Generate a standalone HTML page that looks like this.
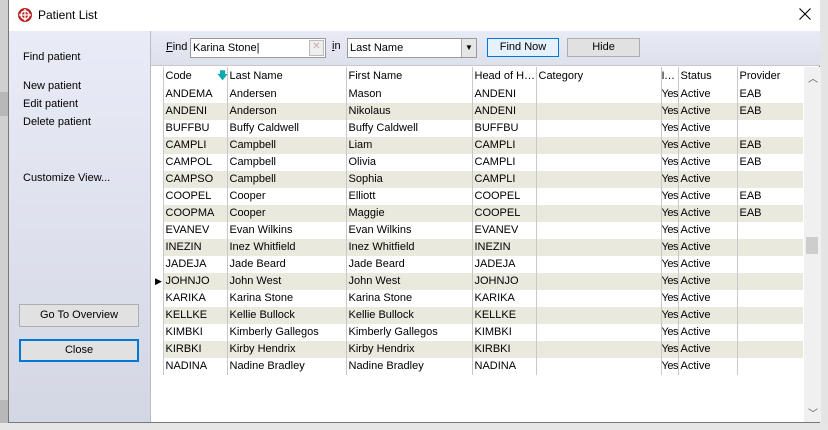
<!DOCTYPE html>
<html><head><meta charset="utf-8">
<style>
*{margin:0;padding:0;box-sizing:border-box}
body{width:828px;height:430px;overflow:hidden;background:#d0d0d0;font-family:"Liberation Sans",sans-serif;font-size:11px;color:#000;position:relative}
.abs{position:absolute}
.win{left:8px;top:0;width:812px;height:423px;background:#fff;border:1px solid #777;border-top:none}
.title{left:0;top:0;width:811px;height:31px;background:#fff}
.left{left:0;top:31px;width:142px;height:391px;background:linear-gradient(#e9ecf7,#d3d7e3);border-right:1px solid #b8bcc8}
.left .lnk{position:absolute;left:14px;font-size:11px}
.btn{position:absolute;border:1px solid #adadad;background:#e1e1e1;text-align:center;font-size:11px}
.tool{left:142px;top:31px;width:669px;height:35px;background:linear-gradient(#e8ebf5,#dde1ec);border-bottom:1px solid #c8c8c8}
table{border-collapse:collapse;position:absolute;left:155px;top:67px;table-layout:fixed;width:648px}
td{height:17px;padding:0 0 0 2px;white-space:nowrap;overflow:hidden;border-left:1px solid #c8c8c8;font-size:11px;line-height:17px}
td:nth-child(7){padding:0;letter-spacing:-0.5px}
tr.h td{height:19px;line-height:19px}
tr.s td{background:#e9e9dd}
td.ri{border-left:none;background:#fff!important;padding:0}
</style></head><body>
<div class="abs" style="left:0;top:92px;width:8px;height:24px;background:#b8b8b8"></div>
<div class="abs" style="left:0;top:400px;width:8px;height:24px;background:#b8b8b8"></div>
<div class="abs" style="left:820px;top:0;width:8px;height:430px;background:#e4e4e4"></div>
<div class="abs" style="left:0;top:423px;width:828px;height:7px;background:#e6e6e6"></div>
<div class="abs win">
 <div class="abs title">
  <svg class="abs" style="left:8px;top:7px" width="16" height="16" viewBox="0 0 16 16"><circle cx="8" cy="8" r="7" fill="#b22"/><circle cx="8" cy="8" r="4" fill="none" stroke="#fff" stroke-width="1.5"/><path d="M2 8h12M8 2v12" stroke="#fff" stroke-width="1.3"/></svg>
  <div class="abs" style="left:29px;top:8px;font-size:12px">Patient List</div>
  <svg class="abs" style="left:790px;top:8px" width="12" height="12" viewBox="0 0 12 12"><path d="M0.5 0.5L11.5 11.5M11.5 0.5L0.5 11.5" stroke="#000" stroke-width="1.1"/></svg>
 </div>
 <div class="abs left">
  <div class="lnk" style="top:20px">Find patient</div>
  <div class="lnk" style="top:49px">New patient</div>
  <div class="lnk" style="top:67px">Edit patient</div>
  <div class="lnk" style="top:85px">Delete patient</div>
  <div class="lnk" style="top:141px">Customize View...</div>
  <div class="btn" style="left:10px;top:273px;width:120px;height:23px;line-height:21px">Go To Overview</div>
  <div class="btn" style="left:10px;top:308px;width:120px;height:23px;line-height:19px;border:2px solid #0078d7">Close</div>
 </div>
 <div class="abs tool">
  <div class="abs" style="left:15px;top:10px"><u>F</u>ind</div>
  <div class="abs" style="left:39px;top:7px;width:136px;height:20px;background:#fff;border:1px solid #999;padding:3px 0 0 2px">Karina Stone|</div>
  <div class="abs" style="left:158px;top:9px;width:15px;height:16px;border:1px solid #bbb;background:#eee;color:#caa;font-size:10px;text-align:center">✕</div>
  <div class="abs" style="left:181px;top:9px"><u>i</u>n</div>
  <div class="abs" style="left:196px;top:7px;width:130px;height:20px;background:#fff;border:1px solid #999;padding:3px 0 0 2px">Last Name</div>
  <div class="abs" style="left:310px;top:8px;width:15px;height:18px;background:#e6e6e6;border-left:1px solid #aaa;font-size:8px;text-align:center;line-height:18px">▼</div>
  <div class="btn" style="left:336px;top:7px;width:72px;height:19px;line-height:17px;background:#e5f1fb;border-color:#0078d7">Find Now</div>
  <div class="btn" style="left:416px;top:7px;width:73px;height:19px;line-height:17px">Hide</div>
 </div>
 <div class="abs" style="left:795px;top:67px;width:17px;height:355px;background:#f0f0f0"></div>
 <div class="abs" style="left:797px;top:237px;width:12px;height:17px;background:#cdcdcd"></div>
 <div class="abs" style="left:799px;top:70px;font-size:10px;color:#555">︿</div>
 <div class="abs" style="left:799px;top:405px;font-size:10px;color:#555">﹀</div>
</div>
<table>
<colgroup><col style="width:8px"><col style="width:64px"><col style="width:119px"><col style="width:126px"><col style="width:64px"><col style="width:125px"><col style="width:17px"><col style="width:59px"><col style="width:66px"></colgroup>
<tr class="h"><td class="ri"></td><td>Code <span style="color:#1aa;margin-left:22px">🡇</span></td><td>Last Name</td><td>First Name</td><td>Head of H…</td><td>Category</td><td>I…</td><td>Status</td><td>Provider</td></tr>
<tr><td class="ri"></td><td>ANDEMA</td><td>Andersen</td><td>Mason</td><td>ANDENI</td><td></td><td>Yes</td><td>Active</td><td>EAB</td></tr>
<tr class="s"><td class="ri"></td><td>ANDENI</td><td>Anderson</td><td>Nikolaus</td><td>ANDENI</td><td></td><td>Yes</td><td>Active</td><td>EAB</td></tr>
<tr><td class="ri"></td><td>BUFFBU</td><td>Buffy Caldwell</td><td>Buffy Caldwell</td><td>BUFFBU</td><td></td><td>Yes</td><td>Active</td><td></td></tr>
<tr class="s"><td class="ri"></td><td>CAMPLI</td><td>Campbell</td><td>Liam</td><td>CAMPLI</td><td></td><td>Yes</td><td>Active</td><td>EAB</td></tr>
<tr><td class="ri"></td><td>CAMPOL</td><td>Campbell</td><td>Olivia</td><td>CAMPLI</td><td></td><td>Yes</td><td>Active</td><td>EAB</td></tr>
<tr class="s"><td class="ri"></td><td>CAMPSO</td><td>Campbell</td><td>Sophia</td><td>CAMPLI</td><td></td><td>Yes</td><td>Active</td><td></td></tr>
<tr><td class="ri"></td><td>COOPEL</td><td>Cooper</td><td>Elliott</td><td>COOPEL</td><td></td><td>Yes</td><td>Active</td><td>EAB</td></tr>
<tr class="s"><td class="ri"></td><td>COOPMA</td><td>Cooper</td><td>Maggie</td><td>COOPEL</td><td></td><td>Yes</td><td>Active</td><td>EAB</td></tr>
<tr><td class="ri"></td><td>EVANEV</td><td>Evan Wilkins</td><td>Evan Wilkins</td><td>EVANEV</td><td></td><td>Yes</td><td>Active</td><td></td></tr>
<tr class="s"><td class="ri"></td><td>INEZIN</td><td>Inez Whitfield</td><td>Inez Whitfield</td><td>INEZIN</td><td></td><td>Yes</td><td>Active</td><td></td></tr>
<tr><td class="ri"></td><td>JADEJA</td><td>Jade Beard</td><td>Jade Beard</td><td>JADEJA</td><td></td><td>Yes</td><td>Active</td><td></td></tr>
<tr class="s"><td class="ri" style="font-size:9px">▶</td><td>JOHNJO</td><td>John West</td><td>John West</td><td>JOHNJO</td><td></td><td>Yes</td><td>Active</td><td></td></tr>
<tr><td class="ri"></td><td>KARIKA</td><td>Karina Stone</td><td>Karina Stone</td><td>KARIKA</td><td></td><td>Yes</td><td>Active</td><td></td></tr>
<tr class="s"><td class="ri"></td><td>KELLKE</td><td>Kellie Bullock</td><td>Kellie Bullock</td><td>KELLKE</td><td></td><td>Yes</td><td>Active</td><td></td></tr>
<tr><td class="ri"></td><td>KIMBKI</td><td>Kimberly Gallegos</td><td>Kimberly Gallegos</td><td>KIMBKI</td><td></td><td>Yes</td><td>Active</td><td></td></tr>
<tr class="s"><td class="ri"></td><td>KIRBKI</td><td>Kirby Hendrix</td><td>Kirby Hendrix</td><td>KIRBKI</td><td></td><td>Yes</td><td>Active</td><td></td></tr>
<tr><td class="ri"></td><td>NADINA</td><td>Nadine Bradley</td><td>Nadine Bradley</td><td>NADINA</td><td></td><td>Yes</td><td>Active</td><td></td></tr>
</table>
</body></html>
